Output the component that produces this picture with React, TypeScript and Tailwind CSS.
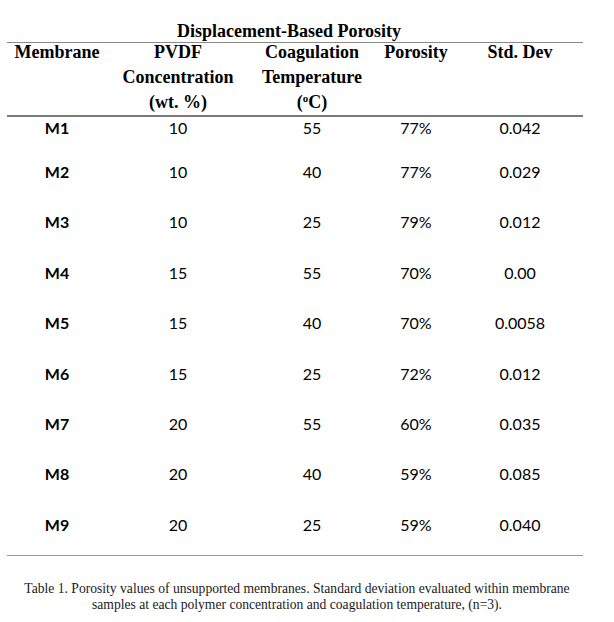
import React from "react";

interface PorosityRow {
  id: string;
  pvdf: number;
  temp: number;
  porosity: string;
  stdDev: string;
}

const rows: PorosityRow[] = [
  { id: "M1", pvdf: 10, temp: 55, porosity: "77%", stdDev: "0.042" },
  { id: "M2", pvdf: 10, temp: 40, porosity: "77%", stdDev: "0.029" },
  { id: "M3", pvdf: 10, temp: 25, porosity: "79%", stdDev: "0.012" },
  { id: "M4", pvdf: 15, temp: 55, porosity: "70%", stdDev: "0.00" },
  { id: "M5", pvdf: 15, temp: 40, porosity: "70%", stdDev: "0.0058" },
  { id: "M6", pvdf: 15, temp: 25, porosity: "72%", stdDev: "0.012" },
  { id: "M7", pvdf: 20, temp: 55, porosity: "60%", stdDev: "0.035" },
  { id: "M8", pvdf: 20, temp: 40, porosity: "59%", stdDev: "0.085" },
  { id: "M9", pvdf: 20, temp: 25, porosity: "59%", stdDev: "0.040" },
];

// column widths line up with the centres in the scan
const cols = "grid grid-cols-[100px_142px_126px_82px_126px]";

export default function App() {
  return (
    <div className="w-[614px] h-[622px] bg-white text-black pt-[20px] pl-[7px]">
      <div className="w-[576px]">
        {/* title */}
        <div className="h-[22px] leading-[22px] text-center pr-[12px] font-['Liberation_Serif',serif] font-bold text-[18px]">
          Displacement-Based Porosity
        </div>

        {/* header */}
        <div className="border-t border-[#8a8a8a]">
          <div className={`${cols} -mt-[3px] h-[75px] font-['Liberation_Serif',serif] font-bold text-[18px] leading-[25px] text-center`}>
            <div>Membrane</div>
            <div>
              PVDF
              <br />
              Concentration
              <br />
              (wt. %)
            </div>
            <div>
              Coagulation
              <br />
              Temperature
              <br />
              (<span className="text-[11px] leading-none align-[6px]">o</span>C)
            </div>
            <div>Porosity</div>
            <div>Std. Dev</div>
          </div>
        </div>

        {/* body */}
        <div className="border-t-2 border-[#7a7a7a] flex flex-col gap-[28.4px] font-['Lato',sans-serif] text-[16px] leading-[22px] text-center pb-[19px]">
          {rows.map((row, i) => (
            <div key={row.id} className={`${cols} ${i === 0 ? "-mb-[6.4px]" : ""}`}>
              <div className="font-bold">{row.id}</div>
              <div>{row.pvdf}</div>
              <div>{row.temp}</div>
              <div>{row.porosity}</div>
              <div>{row.stdDev}</div>
            </div>
          ))}
        </div>

        <div className="border-t border-[#9a9a9a]" />
      </div>

      {/* caption */}
      <p className="mt-[25px] w-[580px] font-['Liberation_Serif',serif] text-[13.6px] leading-[16px] text-center text-[#1a1a1a]">
        Table 1. Porosity values of unsupported membranes. Standard deviation evaluated within membrane
        <br />
        samples at each polymer concentration and coagulation temperature, (n=3).
      </p>
    </div>
  );
}
